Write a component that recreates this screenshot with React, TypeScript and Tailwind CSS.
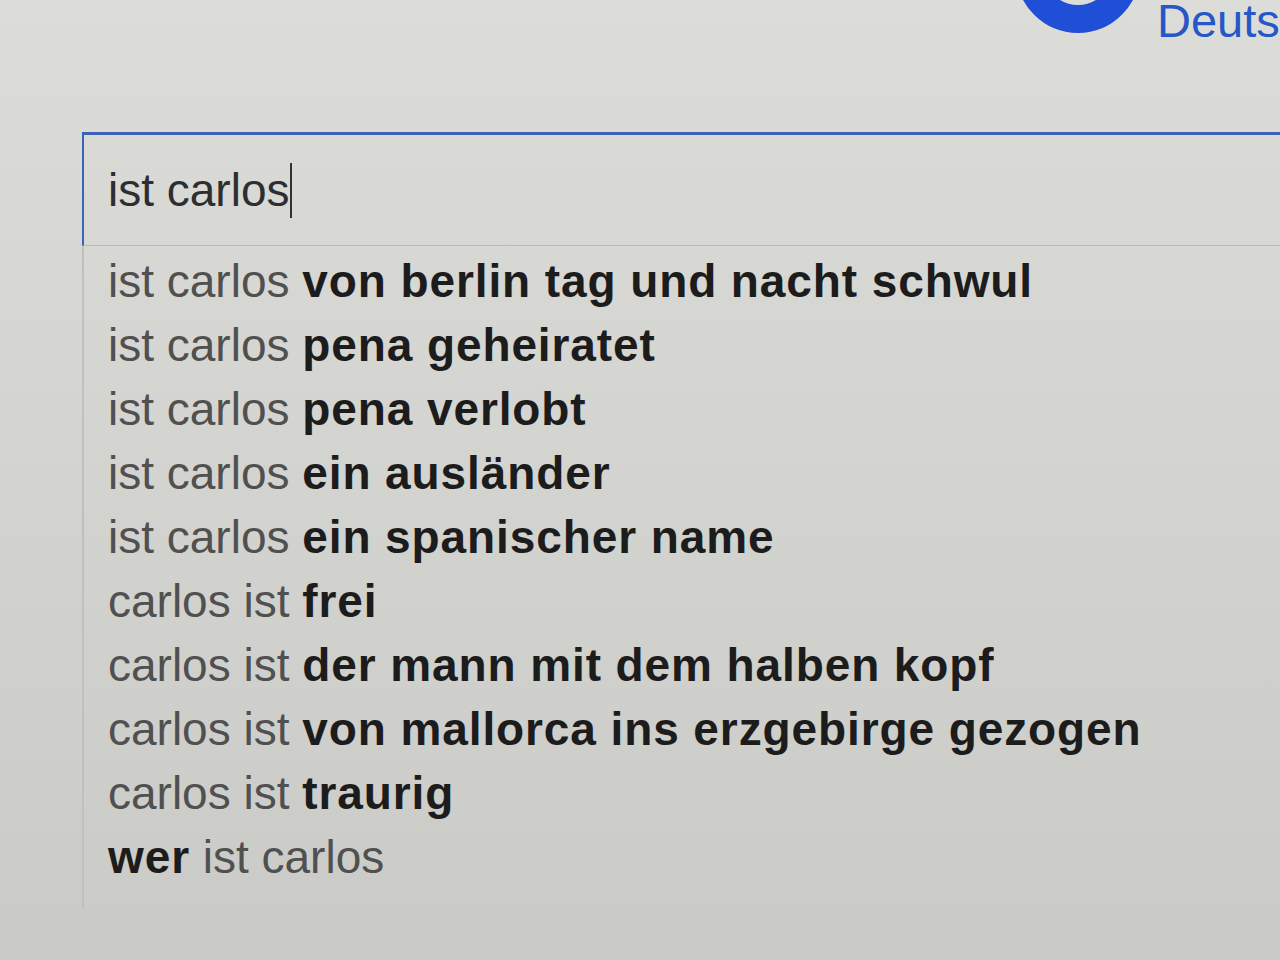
const suggestions: { pre?: string; bold: string; post?: string }[] = [
  { pre: "ist carlos ", bold: "von berlin tag und nacht schwul" },
  { pre: "ist carlos ", bold: "pena geheiratet" },
  { pre: "ist carlos ", bold: "pena verlobt" },
  { pre: "ist carlos ", bold: "ein ausländer" },
  { pre: "ist carlos ", bold: "ein spanischer name" },
  { pre: "carlos ist ", bold: "frei" },
  { pre: "carlos ist ", bold: "der mann mit dem halben kopf" },
  { pre: "carlos ist ", bold: "von mallorca ins erzgebirge gezogen" },
  { pre: "carlos ist ", bold: "traurig" },
  { bold: "wer", post: " ist carlos" },
];

function Logo() {
  return (
    <svg width="124" height="40" viewBox="0 0 124 40" className="shrink-0">
      <circle cx="62" cy="-29" r="48" fill="none" stroke="#1f4fd6" strokeWidth="28" />
    </svg>
  );
}

export default function App() {
  return (
    <div className="w-[1280px] h-[960px] overflow-hidden bg-linear-to-b from-[#dcdcd8] to-[#cacac6] font-['Liberation_Sans',Arial,sans-serif]">
      {/* Header */}
      <div className="h-[40px] flex items-start gap-[17px] pl-[1016px] overflow-hidden">
        <Logo />
        <span className="mt-[-3px] text-[47px] leading-none text-[#2557c8] whitespace-nowrap">
          Deutsch
        </span>
      </div>

      {/* Search */}
      <div className="mt-[92px] ml-[82px]">
        <div className="h-[114px] border-t-[3px] border-l-2 border-[#3d63b8] border-b border-b-[#b9b9b5] flex items-center pl-[24px]">
          <span className="text-[46px] leading-[64px] text-[#2e2e2e]">ist carlos</span>
          <span className="w-[2px] h-[55px] bg-[#333] ml-px" />
        </div>

        {/* Suggestions */}
        <ul className="border-l-2 border-[#c0c0bc] pl-[24px] pt-[3px] pb-[20px]">
          {suggestions.map((s, i) => (
            <li key={i} className="h-[64px] text-[46px] leading-[64px] whitespace-nowrap">
              {s.pre && <span className="text-[#505050]">{s.pre}</span>}
              <span className="font-bold tracking-[0.9px] text-[#1c1c1c]">{s.bold}</span>
              {s.post && <span className="text-[#505050]">{s.post}</span>}
            </li>
          ))}
        </ul>
      </div>
    </div>
  );
}
